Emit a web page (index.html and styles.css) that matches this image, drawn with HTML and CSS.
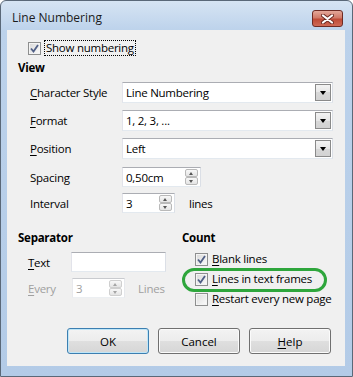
FILE: index.html
```html
<!DOCTYPE html>
<html lang="en">
<head>
    <meta charset="UTF-8">
    <title>Line Numbering</title>
    <link rel="stylesheet" href="styles.css">
</head>
<body>

    <div class="window">
        <!-- Title bar -->
        <div class="titlebar">
            <span class="title">Line Numbering</span>
            <span class="close-btn">
                <svg width="13" height="10" viewBox="0 0 13 10">
                    <path d="M2 1.5 L11 8.5 M11 1.5 L2 8.5" stroke="#6b2a22" stroke-width="4" stroke-linecap="round"/>
                    <path d="M2 1.5 L11 8.5 M11 1.5 L2 8.5" stroke="#fff" stroke-width="2.2" stroke-linecap="round"/>
                </svg>
            </span>
        </div>

        <div class="client">
            <div class="check-row show-row">
                <span class="box checked"></span>
                <span class="focus">Show numbering</span>
            </div>

            <div class="heading view-heading">View</div>

            <!-- View section -->
            <div class="field-row combo-row">
                <span class="lbl"><u>C</u>haracter Style</span>
                <div class="combo"><span class="value">Line Numbering</span><span class="drop"></span></div>
            </div>
            <div class="field-row combo-row">
                <span class="lbl"><u>F</u>ormat</span>
                <div class="combo"><span class="value">1, 2, 3, ...</span><span class="drop"></span></div>
            </div>
            <div class="field-row combo-row last-combo">
                <span class="lbl"><u>P</u>osition</span>
                <div class="combo"><span class="value">Left</span><span class="drop"></span></div>
            </div>
            <div class="field-row spin-row">
                <span class="lbl">Spacin<u>g</u></span>
                <div class="spin wide"><span class="value">0,50cm</span><span class="arrows"><span class="up"></span><span class="down"></span></span></div>
            </div>
            <div class="field-row spin-row">
                <span class="lbl">Interval</span>
                <div class="spin"><span class="value">3</span><span class="arrows"><span class="up"></span><span class="down"></span></span></div>
                <span class="unit">lines</span>
            </div>

            <!-- Separator and Count -->
            <div class="lower">
                <div class="separator">
                    <div class="heading">Separator</div>
                    <div class="sep-row">
                        <span class="sep-lbl"><u>T</u>ext</span>
                        <div class="textbox"></div>
                    </div>
                    <div class="sep-row disabled">
                        <span class="sep-lbl"><u>E</u>very</span>
                        <div class="spin small"><span class="value">3</span><span class="arrows"><span class="up"></span><span class="down"></span></span></div>
                        <span class="sep-unit">Lines</span>
                    </div>
                </div>
                <div class="count">
                    <div class="heading">Count</div>
                    <div class="check-row count-row">
                        <span class="box checked"></span>
                        <span><u>B</u>lank lines</span>
                    </div>
                    <div class="check-row count-row">
                        <span class="box checked"></span>
                        <span><u>L</u>ines in text frames</span>
                    </div>
                    <div class="check-row count-row">
                        <span class="box"></span>
                        <span><u>R</u>estart every new page</span>
                    </div>
                    <!-- hand drawn marker -->
                    <div class="marker"></div>
                </div>
            </div>

            <div class="buttons">
                <button class="btn default">OK</button>
                <button class="btn">Cancel</button>
                <button class="btn"><u>H</u>elp</button>
            </div>
        </div>
    </div>

</body>
</html>
```

FILE: styles.css
```css
body {
    margin: 0;
    font-family: "Open Sans", "Noto Sans", sans-serif;
    font-size: 11.5px;
    letter-spacing: -0.25px;
    color: #000;
    background: #fff;
}

u {
    text-decoration: underline;
    text-underline-offset: 2px;
}

/* Window frame */
.window {
    width: 353px;
    height: 377px;
    box-sizing: border-box;
    border: 1px solid #5a6878;
    border-radius: 6px 6px 0 0;
    background: linear-gradient(#d6e4f3, #bcd2eb 30px, #b3cbe7);
    padding: 0 7px 10px 6px;
    display: flex;
    flex-direction: column;
}

.titlebar {
    height: 29px;
    display: flex;
    align-items: flex-start;
    flex-shrink: 0;
}

.title {
    margin: 9px 0 0 5px;
    line-height: 16px;
    font-size: 12px;
    letter-spacing: 0;
    color: #1b1b1b;
}

.close-btn {
    margin: 9px 2px 0 auto;
    width: 31px;
    height: 17px;
    box-sizing: border-box;
    border: 1px solid #6e2b24;
    border-radius: 3px;
    background: linear-gradient(#e4a89a, #d17a68 45%, #bf4b37 55%, #cf6a56);
    display: flex;
    align-items: center;
    justify-content: center;
}

.client {
    flex: 1;
    background: #f0f0f0;
    display: flex;
    flex-direction: column;
}

/* Checkboxes */
.check-row {
    display: flex;
    align-items: center;
    line-height: 16px;
}

.box {
    width: 13px;
    height: 13px;
    box-sizing: border-box;
    border: 1px solid #8e8f8f;
    background: linear-gradient(135deg, #dcdcdc, #fbfbfb);
    box-shadow: inset 0 0 0 1px #f4f4f4;
    flex-shrink: 0;
}

.box.checked {
    background: url("data:image/svg+xml,%3Csvg xmlns='http://www.w3.org/2000/svg' width='11' height='11'%3E%3Cpath d='M2 5.5 L4.5 8.5 L9 2' fill='none' stroke='%23505f86' stroke-width='1.8'/%3E%3C/svg%3E") center no-repeat, linear-gradient(135deg, #d8d8d8, #fbfbfb);
}

.show-row {
    margin: 10px 0 0 21px;
    height: 16px;
}

.focus {
    margin-left: 3px;
    padding: 0 1px;
    border: 1px dotted #000;
    line-height: 14px;
}

.heading {
    font-weight: bold;
    line-height: 16px;
}

.view-heading {
    margin: 4px 0 0 11px;
}

/* View rows */
.field-row {
    display: flex;
    align-items: center;
    margin-left: 23px;
}

.lbl {
    width: 92px;
}

.combo-row {
    height: 21px;
    margin-top: 7px;
}

.view-heading + .combo-row {
    margin-top: 6px;
}

.spin-row {
    height: 20px;
    margin-top: 6px;
}

.last-combo {
    margin-bottom: 2px;
}

.combo {
    width: 211px;
    height: 21px;
    box-sizing: border-box;
    border: 1px solid #abadb3;
    border-color: #abadb3 #dbdfe6 #e3e9ef #e2e3ea;
    background: #fff;
    display: flex;
    align-items: center;
}

.value {
    flex: 1;
    padding-left: 3px;
}

.drop {
    width: 16px;
    height: 17px;
    margin-right: 1px;
    box-sizing: border-box;
    border: 1px solid #8a8a8a;
    background: linear-gradient(#f3f3f3, #e6e6e6 50%, #d8d8d8 50%, #d2d2d2);
    position: relative;
}

.drop::after {
    content: "";
    position: absolute;
    left: 4px;
    top: 6px;
    border-left: 3.5px solid transparent;
    border-right: 3.5px solid transparent;
    border-top: 4px solid #000;
}

.spin {
    width: 53px;
    height: 20px;
    box-sizing: border-box;
    border: 1px solid #abadb3;
    border-color: #abadb3 #dbdfe6 #e3e9ef #e2e3ea;
    background: #fff;
    display: flex;
    align-items: center;
}

.spin.wide {
    width: 79px;
}

.arrows {
    width: 13px;
    height: 16px;
    margin-right: 2px;
    display: flex;
    flex-direction: column;
}

.arrows span {
    flex: 1;
    box-sizing: border-box;
    border: 1px solid #b9b9b9;
    border-radius: 2px;
    background: linear-gradient(#f8f8f8, #e4e4e4);
    position: relative;
}

.arrows span::after {
    content: "";
    position: absolute;
    left: 3px;
    top: 2px;
    border-left: 2.5px solid transparent;
    border-right: 2.5px solid transparent;
}

.arrows .up::after {
    border-bottom: 3px solid #555;
}

.arrows .down::after {
    border-top: 3px solid #555;
}

.unit {
    margin-left: 14px;
}

/* Separator and Count */
.lower {
    display: flex;
    margin-top: 17px;
}

.separator {
    width: 164px;
    padding-left: 11px;
    box-sizing: border-box;
}

.sep-row {
    display: flex;
    align-items: center;
    height: 20px;
    margin-top: 6px;
    padding-left: 10px;
}

.sep-lbl {
    width: 43px;
}

.textbox {
    width: 95px;
    height: 20px;
    box-sizing: border-box;
    border: 1px solid #abadb3;
    border-color: #abadb3 #dbdfe6 #e3e9ef #e2e3ea;
    background: #fff;
}

.disabled {
    color: #a0a0a0;
}

.disabled .sep-lbl {
    width: 44px;
}

.disabled .spin {
    border-color: #c9cbcf #e6e8ec #eceff2 #e8e9ed;
}

.disabled .arrows span {
    border-color: #cfcfcf;
}

.disabled .arrows .up::after {
    border-bottom-color: #a5a5a5;
}

.disabled .arrows .down::after {
    border-top-color: #a5a5a5;
}

.sep-unit {
    margin-left: 13px;
}

.count {
    position: relative;
    padding-left: 11px;
}

.count-row {
    height: 20px;
    margin-left: 13px;
    white-space: nowrap;
}

.count .heading + .count-row {
    margin-top: 3px;
}

.count-row .box {
    margin-right: 4px;
}

.marker {
    position: absolute;
    left: 11px;
    top: 38px;
    width: 145px;
    height: 24px;
    box-sizing: border-box;
    border: 3px solid #2ea63c;
    border-radius: 12px;
}

/* Buttons */
.buttons {
    margin-top: auto;
    margin-bottom: 12px;
    margin-right: 14px;
    display: flex;
    justify-content: flex-end;
    gap: 9px;
}

.btn {
    width: 82px;
    height: 26px;
    box-sizing: border-box;
    border: 1px solid #707070;
    border-radius: 3px;
    background: linear-gradient(#f3f3f3, #ececec 50%, #dfdfdf 50%, #d6d6d6);
    box-shadow: inset 0 0 0 1px #fbfbfb;
    font: inherit;
    color: #000;
    padding: 0;
}

.btn.default {
    border-color: #3c7fb1;
    box-shadow: inset 0 0 0 1px #bfe6f8;
}
```
